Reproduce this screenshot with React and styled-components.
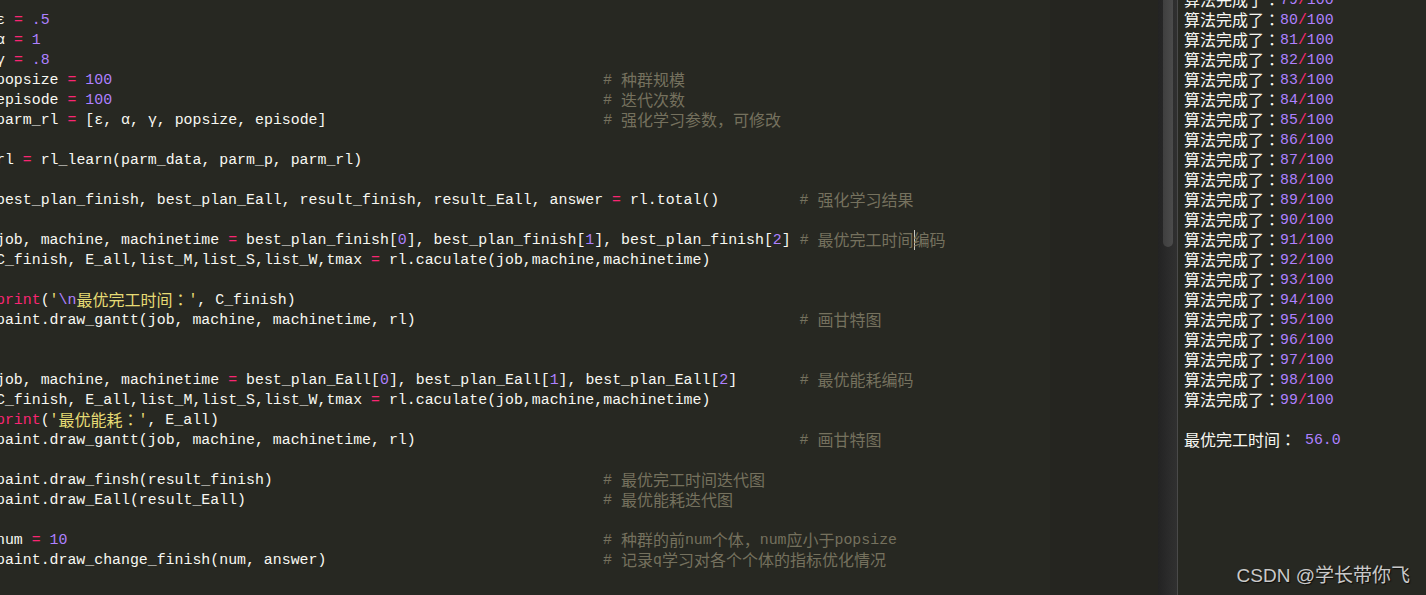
import React from 'react';
import styled, { createGlobalStyle } from 'styled-components';

const Global = createGlobalStyle`
  html, body { margin: 0; padding: 0; background: #272822; overflow: hidden; }
  #root { width: 1426px; height: 595px; }
`;

const C = {
  bg: '#272822',
  fg: '#f8f8f2',
  pink: '#f92672',
  purple: '#ae81ff',
  yellow: '#e6db74',
  comment: '#75715e',
};

const Window = styled.div`
  position: relative;
  display: flex;
  width: 1426px;
  height: 595px;
  background: ${C.bg};
  overflow: hidden;
  font-family: "Liberation Mono", "Noto Sans CJK SC", monospace;
  font-size: 14.88px;
  color: ${C.fg};
`;

const Editor = styled.div`
  flex: 0 0 1050px;
  overflow: hidden;
  background: ${C.bg};
  padding-top: 10px;
`;

const CodeBlock = styled.div`
  margin-left: -4px;
`;

const Line = styled.div`
  height: 20px;
  line-height: 20px;
  white-space: pre;
  overflow: visible;
`;

const Minimap = styled.div`
  flex: 0 0 108px;
  background: #252520;
`;

const Track = styled.div`
  flex: 0 0 20px;
  display: flex;
  padding-left: 5px;
  box-sizing: border-box;
  background: linear-gradient(to right, #232323, #2d2d2d 70%, #303030);
  border-right: 1px solid #4a4a4a;
`;

const Thumb = styled.div`
  width: 10px;
  height: 247px;
  background: linear-gradient(to right, #3f3f3f, #4c4c4c);
  border-radius: 0 0 5px 5px;
`;

const Console = styled.div`
  flex: 1;
  overflow: hidden;
  background: ${C.bg};
  padding-left: 6px;
`;

const ConsoleList = styled.div`
  margin-top: -10px;
`;

const Tok = styled.span`
  color: ${(p) => C[p.$c] || C.fg};
`;

const Cjk = styled.span`
  display: inline-block;
  vertical-align: top;
  height: 20px;
  line-height: 19px;
  font-family: ${(p) => (p.$jp ? '"Noto Sans CJK JP"' : '"Noto Sans CJK SC"')}, sans-serif;
  font-size: 16px;
`;

const Caret = styled.span`
  display: inline-block;
  width: 0;
  height: 20px;
  vertical-align: top;
  border-left: 1px solid #c8c8c0;
  margin-right: -1px;
`;

const Watermark = styled.div`
  position: absolute;
  right: 16px;
  bottom: 8px;
  font-family: "Liberation Sans", "Noto Sans CJK SC", sans-serif;
  font-size: 19px;
  line-height: 22px;
  color: #c9c9c9;
  text-shadow: 1px 1px 1px rgba(0, 0, 0, 0.7);
`;

const cjkRe = /([\u3000-\u303f\u4e00-\u9fff\uff00-\uffef]+)/;

function renderText(text, keyPrefix) {
  const out = [];
  text.split(cjkRe).forEach((part, i) => {
    if (!cjkRe.test(part)) {
      if (part) out.push(part);
      return;
    }
    // colon drawn centred, as in the reference
    part.split(/(：)/).forEach((sub, j) => {
      if (!sub) return;
      out.push(
        <Cjk key={keyPrefix + '-' + i + '-' + j} $jp={sub === '：'}>
          {sub}
        </Cjk>
      );
    });
  });
  return out;
}

const tokRe = /'[^']*'|\bprint\b|[A-Za-z_]\w*|\.?\d+(?:\.\d+)?|=|\s+|./gu;

function renderCode(code) {
  const out = [];
  let m;
  let i = 0;
  tokRe.lastIndex = 0;
  while ((m = tokRe.exec(code)) !== null) {
    const t = m[0];
    const k = 't' + i++;
    if (t.startsWith("'")) {
      const parts = t.split(/(\\n)/);
      out.push(
        <Tok key={k} $c="yellow">
          {parts.map((p, j) =>
            p === '\\n' ? (
              <Tok key={j} $c="purple">
                {p}
              </Tok>
            ) : (
              <React.Fragment key={j}>{renderText(p, k + j)}</React.Fragment>
            )
          )}
        </Tok>
      );
    } else if (t === 'print' || t === '=') {
      out.push(
        <Tok key={k} $c="pink">
          {t}
        </Tok>
      );
    } else if (/^\.?\d/.test(t)) {
      out.push(
        <Tok key={k} $c="purple">
          {t}
        </Tok>
      );
    } else {
      out.push(<React.Fragment key={k}>{t}</React.Fragment>);
    }
  }
  return out;
}

const lines = [
  { code: 'ε = .5' },
  { code: 'α = 1' },
  { code: 'γ = .8' },
  { code: 'popsize = 100', col: 68, comment: '# 种群规模' },
  { code: 'episode = 100', col: 68, comment: '# 迭代次数' },
  { code: 'parm_rl = [ε, α, γ, popsize, episode]', col: 68, comment: '# 强化学习参数，可修改' },
  { code: '' },
  { code: 'rl = rl_learn(parm_data, parm_p, parm_rl)' },
  { code: '' },
  {
    code: 'best_plan_finish, best_plan_Eall, result_finish, result_Eall, answer = rl.total()',
    col: 90,
    comment: '# 强化学习结果',
  },
  { code: '' },
  {
    code: 'job, machine, machinetime = best_plan_finish[0], best_plan_finish[1], best_plan_finish[2]',
    col: 90,
    comment: '# 最优完工时间',
    caret: true,
    after: '编码',
  },
  { code: 'C_finish, E_all,list_M,list_S,list_W,tmax = rl.caculate(job,machine,machinetime)' },
  { code: '' },
  { code: "print('\\n最优完工时间：', C_finish)" },
  { code: 'paint.draw_gantt(job, machine, machinetime, rl)', col: 90, comment: '# 画甘特图' },
  { code: '' },
  { code: '' },
  {
    code: 'job, machine, machinetime = best_plan_Eall[0], best_plan_Eall[1], best_plan_Eall[2]',
    col: 90,
    comment: '# 最优能耗编码',
  },
  { code: 'C_finish, E_all,list_M,list_S,list_W,tmax = rl.caculate(job,machine,machinetime)' },
  { code: "print('最优能耗：', E_all)" },
  { code: 'paint.draw_gantt(job, machine, machinetime, rl)', col: 90, comment: '# 画甘特图' },
  { code: '' },
  { code: 'paint.draw_finsh(result_finish)', col: 68, comment: '# 最优完工时间迭代图' },
  { code: 'paint.draw_Eall(result_Eall)', col: 68, comment: '# 最优能耗迭代图' },
  { code: '' },
  { code: 'num = 10', col: 68, comment: '# 种群的前num个体，num应小于popsize' },
  { code: 'paint.draw_change_finish(num, answer)', col: 68, comment: '# 记录q学习对各个个体的指标优化情况' },
  { code: '' },
];

function CodeLine({ line, idx }) {
  const pad = line.col ? ' '.repeat(Math.max(1, line.col - [...line.code].length)) : '';
  return (
    <Line>
      {renderCode(line.code)}
      {pad}
      {line.comment && (
        <Tok $c="comment">
          {renderText(line.comment, 'c' + idx)}
          {line.caret && <Caret />}
          {line.after && renderText(line.after, 'a' + idx)}
        </Tok>
      )}
    </Line>
  );
}

function ProgressLine({ n }) {
  return (
    <Line>
      {renderText('算法完成了：', 'p' + n)}
      <Tok $c="purple">{n}</Tok>
      <Tok $c="pink">/</Tok>
      <Tok $c="purple">100</Tok>
    </Line>
  );
}

export default function App() {
  const progress = [];
  for (let n = 79; n <= 99; n++) progress.push(n);
  return (
    <>
      <Global />
      <Window>
        <Editor>
          <CodeBlock>
            {lines.map((l, i) => (
              <CodeLine key={i} line={l} idx={i} />
            ))}
          </CodeBlock>
        </Editor>
        <Minimap />
        <Track>
          <Thumb />
        </Track>
        <Console>
          <ConsoleList>
            {progress.map((n) => (
              <ProgressLine key={n} n={n} />
            ))}
            <Line />
            <Line>
              {renderText('最优完工时间：', 'best')} <Tok $c="purple">56.0</Tok>
            </Line>
          </ConsoleList>
        </Console>
        <Watermark>CSDN @学长带你飞</Watermark>
      </Window>
    </>
  );
}
